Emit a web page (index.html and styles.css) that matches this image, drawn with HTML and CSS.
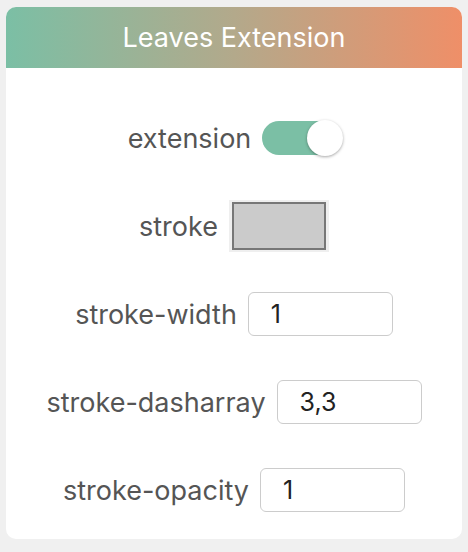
FILE: index.html
```html
<!DOCTYPE html>
<html>
<head>
<meta charset="utf-8">
<link rel="stylesheet" href="styles.css">
</head>
<body>
<div class="card">
  <div class="header">Leaves Extension</div>
  <div class="body">
    <div class="row">
      <span class="label">extension</span>
      <span class="toggle"><span class="knob"></span></span>
    </div>
    <div class="row">
      <span class="label">stroke</span>
      <span class="color"><span class="swatch"></span></span>
    </div>
    <div class="row">
      <span class="label">stroke-width</span>
      <span class="input">1</span>
    </div>
    <div class="row">
      <span class="label">stroke-dasharray</span>
      <span class="input">3,3</span>
    </div>
    <div class="row">
      <span class="label">stroke-opacity</span>
      <span class="input">1</span>
    </div>
  </div>
</div>
</body>
</html>
```

FILE: styles.css
```css
html, body {
  margin: 0;
  padding: 0;
  background: #f0f0f0;
}
body {
  padding: 7px 6px 0 6px;
  font-family: Inter, "Liberation Sans", sans-serif;
}
.card {
  background: #fff;
  border-radius: 10px;
  overflow: hidden;
  width: 456px;
}
.header {
  height: 61px;
  background: linear-gradient(to right, #7bbfa5, #b3a98b 50%, #ef8f68);
  color: #fff;
  font-size: 27px;
  display: flex;
  align-items: center;
  justify-content: center;
}
.body {
  padding: 26px 0 5px;
  display: flex;
  flex-direction: column;
}
.row {
  height: 88px;
  display: flex;
  align-items: center;
  justify-content: center;
  gap: 11px;
}
.label {
  font-size: 27px;
  color: #555;
}
.toggle {
  width: 78px;
  height: 34px;
  border-radius: 17px;
  background: #7bbfa5;
  display: flex;
  justify-content: flex-end;
  align-items: center;
}
.knob {
  width: 36px;
  height: 36px;
  border-radius: 50%;
  background: #fff;
  box-shadow: 0 1px 3px rgba(0,0,0,0.35);
  margin-right: -3px;
}
.color {
  width: 100px;
  height: 52px;
  background: #efefef;
  padding: 2px 3px;
  box-sizing: border-box;
  display: flex;
}
.swatch {
  flex: 1;
  background: #cbcbcb;
  border: 2px solid #777;
}
.input {
  width: 145px;
  height: 44px;
  box-sizing: border-box;
  border: 1.5px solid #ccc;
  border-radius: 6px;
  padding-left: 22px;
  font-size: 25px;
  color: #222;
  display: flex;
  align-items: center;
}
```
